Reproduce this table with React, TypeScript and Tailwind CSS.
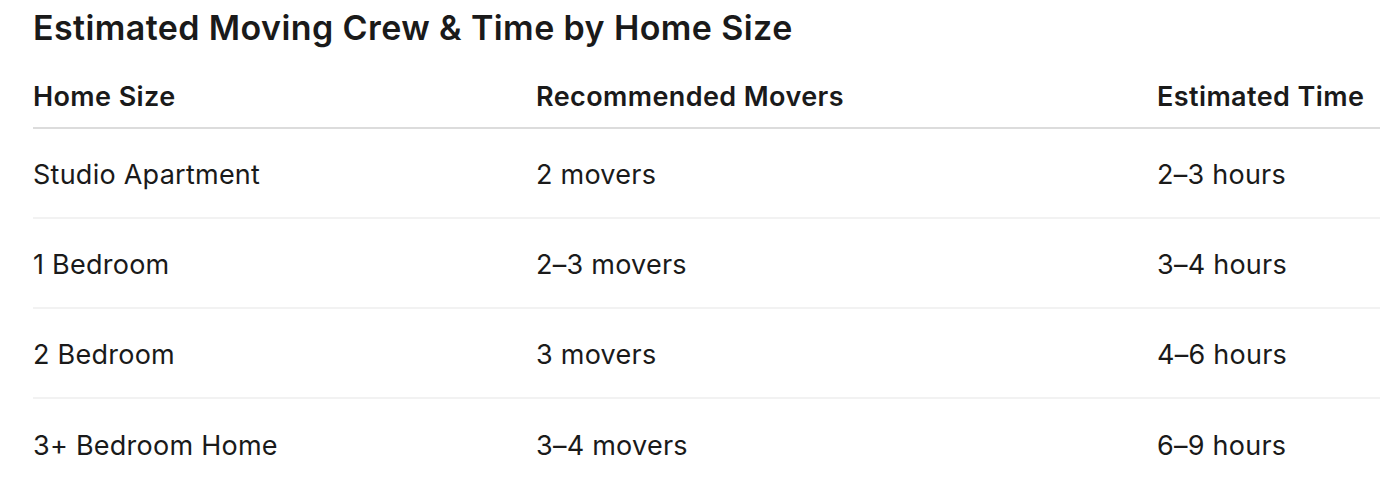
const rows = [
  { size: 'Studio Apartment', movers: '2 movers', time: '2–3 hours' },
  { size: '1 Bedroom', movers: '2–3 movers', time: '3–4 hours' },
  { size: '2 Bedroom', movers: '3 movers', time: '4–6 hours' },
  { size: '3+ Bedroom Home', movers: '3–4 movers', time: '6–9 hours' },
];

const cols = 'grid grid-cols-[503px_621px_1fr] items-center';

export default function App() {
  return (
    <div
      className="min-h-screen bg-white pl-[33px] text-[#1a1a1a]"
      style={{ fontFamily: 'Inter, "Noto Sans", sans-serif' }}
    >
      <h2 className="pt-[8px] text-[34px] font-semibold leading-[40px] tracking-[0.4px]">
        Estimated Moving Crew &amp; Time by Home Size
      </h2>
      <div className="mt-[17px]">
        <div className={`${cols} h-[64px] pt-[2px] border-b-2 border-[#dcdcdc] text-[27px] font-semibold tracking-[0.4px]`}>
          <div>Home Size</div>
          <div>Recommended Movers</div>
          <div>Estimated Time</div>
        </div>
        {rows.map((r, i) => (
          <div
            key={r.size}
            className={`${cols} h-[90px] pt-[5px] text-[27px] tracking-[0.25px] ${i < rows.length - 1 ? 'border-b-2 border-[#f2f2f2]' : ''}`}
          >
            <div>{r.size}</div>
            <div>{r.movers}</div>
            <div>{r.time}</div>
          </div>
        ))}
      </div>
    </div>
  );
}
